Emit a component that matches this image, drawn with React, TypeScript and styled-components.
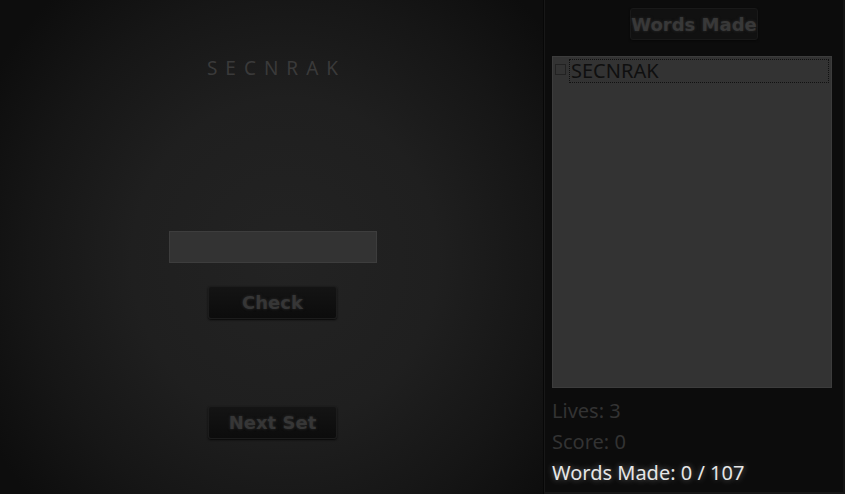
import React from "react";
import styled, { createGlobalStyle } from "styled-components";

const Global = createGlobalStyle`
  html, body { margin: 0; padding: 0; background: #0a0a0a; }
  body { width: 845px; height: 494px; overflow: hidden; }
`;

const Page = styled.div`
  display: flex;
  width: 845px;
  height: 494px;
  background: #0a0a0a;
`;

const GamePanel = styled.div`
  width: 544px;
  height: 494px;
  display: flex;
  flex-direction: column;
  align-items: center;
  padding-left: 2px;
  background: radial-gradient(ellipse 340px 360px at 285px 260px, #232323 0%, #1f1f1f 45%, #161616 75%, #0d0d0d 100%);
  border-right: 1px solid #070707;
  box-sizing: border-box;
`;

const Scrambled = styled.div`
  margin-top: 56px;
  font-family: "Noto Sans", sans-serif;
  font-size: 19px;
  letter-spacing: 8px;
  padding-left: 8px;
  color: #3a3a3a;
  line-height: 24px;
`;

const Guess = styled.input`
  margin-top: 151px;
  width: 208px;
  height: 32px;
  box-sizing: border-box;
  background: #333333;
  border: 1px solid #3d3d3d;
  outline: none;
`;

const ActionButton = styled.button<{ $gap: number }>`
  margin-top: ${(p) => p.$gap}px;
  width: 129px;
  height: 33px;
  padding: 0;
  background: linear-gradient(#141414, #0c0c0c);
  border: 1px solid #1c1c1c;
  border-radius: 3px;
  box-shadow: 0 1px 2px #080808;
  font-family: "DejaVu Sans", sans-serif;
  font-weight: bold;
  font-size: 18px;
  color: #363636;
  text-shadow: 0 0 3px #2c2c2c;
`;

const SidePanel = styled.div`
  flex: 1;
  display: flex;
  flex-direction: column;
  padding: 8px 11px 0 7px;
  background: #0c0c0c;
  border-left: 1px solid #181818;
  border-right: 2px solid #141414;
  border-bottom: 2px solid #161616;
  box-sizing: border-box;
  height: 494px;
`;

const HeaderButton = styled(ActionButton)`
  align-self: center;
  margin-top: 0;
  margin-left: 4px;
  width: 128px;
  height: 32px;
  background: #111111;
  border: 1px solid #191919;
  color: #383838;
`;

const WordList = styled.div`
  margin-top: 16px;
  height: 332px;
  background: #333333;
  border: 1px solid #3c3c3c;
  box-sizing: border-box;
  padding: 1px 2px;
`;

const WordRow = styled.div`
  display: flex;
  align-items: center;
  gap: 3px;
  height: 26px;
`;

const Box = styled.span`
  width: 9px;
  height: 9px;
  border: 1px solid #222;
  margin-top: -4px;
`;

const WordLabel = styled.span`
  flex: 1;
  height: 24px;
  box-sizing: border-box;
  border: 1px dotted #111;
  font-family: "Noto Sans", sans-serif;
  font-size: 20px;
  line-height: 22px;
  color: #0f0f0f;
  padding-left: 1px;
`;

const Stat = styled.div<{ $bright?: boolean }>`
  font-family: "Noto Sans", sans-serif;
  font-size: 20px;
  line-height: 31px;
  color: ${(p) => (p.$bright ? "#e6e6e6" : "#333333")};
  text-shadow: ${(p) =>
    p.$bright ? "0 0 6px rgba(255,255,255,0.35), 0 0 14px rgba(255,255,255,0.12)" : "none"};
`;

const Stats = styled.div`
  margin-top: 7px;
  display: flex;
  flex-direction: column;
`;

export default function App() {
  return (
    <>
      <Global />
      <Page>
        <GamePanel>
          <Scrambled>SECNRAK</Scrambled>
          <Guess />
          <ActionButton $gap={23}>Check</ActionButton>
          <ActionButton $gap={87}>Next Set</ActionButton>
        </GamePanel>
        <SidePanel>
          <HeaderButton $gap={0}>Words Made</HeaderButton>
          <WordList>
            <WordRow>
              <Box />
              <WordLabel>SECNRAK</WordLabel>
            </WordRow>
          </WordList>
          <Stats>
            <Stat>Lives: 3</Stat>
            <Stat>Score: 0</Stat>
            <Stat $bright>Words Made: 0 / 107</Stat>
          </Stats>
        </SidePanel>
      </Page>
    </>
  );
}
